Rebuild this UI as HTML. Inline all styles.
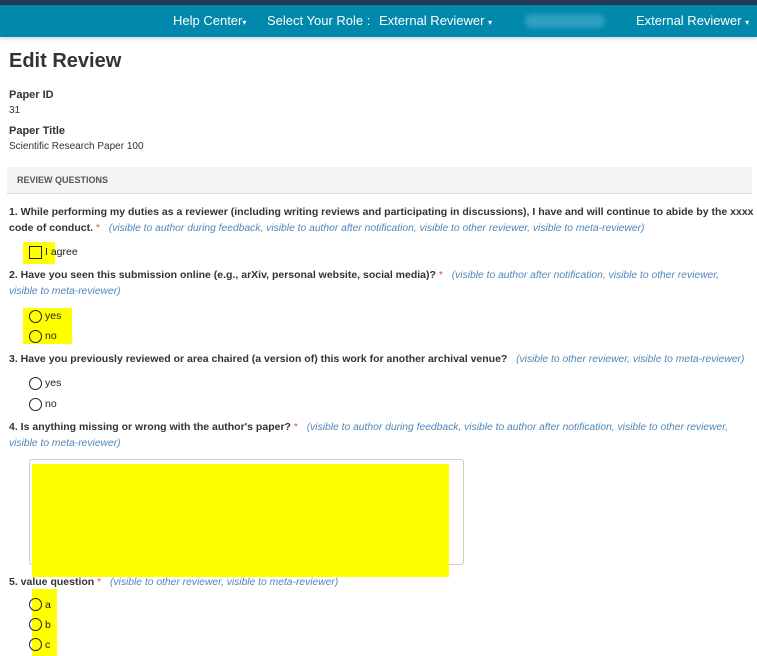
<!DOCTYPE html>
<html><head><style>
body{margin:0;width:757px;height:656px;overflow:hidden;background:#fff;font-family:"Liberation Sans",Arial,sans-serif;color:#333;position:relative}
.a{position:absolute;white-space:nowrap}
.q{font-size:10.5px;font-weight:bold;color:#333}
.h{font-size:10.3px;font-style:italic;font-weight:normal;color:#4f86b8}
.s{color:#d9534f;font-weight:normal}
.r{position:absolute;width:11px;height:11px;border:1px solid #222;border-radius:50%}
.y{position:absolute;background:#ffff00}
.n{position:absolute;top:13px;color:#fff;font-size:13px}
.o{font-size:10.5px;color:#222;line-height:13px}
</style></head><body>
<div class="a" style="left:0;top:0;width:757px;height:5px;background:#263753"></div>
<div class="a" style="left:0;top:5px;width:757px;height:32px;background:#0089ad;box-shadow:0 2px 3px rgba(0,0,0,.15)"></div>
<div class="n" style="left:173px">Help Center<span style="font-size:8px">▾</span></div>
<div class="n" style="left:267px">Select Your Role :</div>
<div class="n" style="left:379px">External Reviewer <span style="font-size:8px">▾</span></div>
<div class="a" style="left:525px;top:14px;width:80px;height:14px;background:#2d9fc0;border-radius:7px;filter:blur(2px)"></div>
<div class="n" style="left:636px">External Reviewer <span style="font-size:8px">▾</span></div>

<div class="a" style="left:9px;top:50px;font-size:20px;font-weight:bold;color:#333">Edit Review</div>
<div class="a" style="left:9px;top:89px;font-size:11px;font-weight:bold">Paper ID</div>
<div class="a" style="left:9px;top:105px;font-size:10px">31</div>
<div class="a" style="left:9px;top:125px;font-size:11px;font-weight:bold">Paper Title</div>
<div class="a" style="left:9px;top:141px;font-size:10px">Scientific Research Paper 100</div>
<div class="a" style="left:7px;top:167px;width:745px;height:26px;background:#f4f4f4;border-bottom:1px solid #ddd"></div>
<div class="a" style="left:17px;top:175px;font-size:9px;font-weight:bold;color:#555">REVIEW QUESTIONS</div>

<div class="a q" style="left:9px;top:206px">1. While performing my duties as a reviewer (including writing reviews and participating in discussions), I have and will continue to abide by the xxxx</div>
<div class="a q" style="left:9px;top:222px">code of conduct. <span class="s">*</span> &nbsp;&nbsp;<span class="h">(visible to author during feedback, visible to author after notification, visible to other reviewer, visible to meta-reviewer)</span></div>
<div class="y" style="left:23px;top:242px;width:32px;height:22px"></div>
<div class="a" style="left:29px;top:246px;width:11px;height:11px;border:1px solid #222"></div>
<div class="a o" style="left:45px;top:246px">I agree</div>

<div class="a q" style="left:9px;top:269px">2. Have you seen this submission online (e.g., arXiv, personal website, social media)? <span class="s">*</span> &nbsp;&nbsp;<span class="h">(visible to author after notification, visible to other reviewer,</span></div>
<div class="a h" style="left:9px;top:286px">visible to meta-reviewer)</div>
<div class="y" style="left:23px;top:308px;width:49px;height:36px"></div>
<div class="r" style="left:29px;top:310px"></div><div class="a o" style="left:45px;top:310px">yes</div>
<div class="r" style="left:29px;top:330px"></div><div class="a o" style="left:45px;top:330px">no</div>

<div class="a q" style="left:9px;top:353px">3. Have you previously reviewed or area chaired (a version of) this work for another archival venue? &nbsp;&nbsp;<span class="h">(visible to other reviewer, visible to meta-reviewer)</span></div>
<div class="r" style="left:29px;top:377px"></div><div class="a o" style="left:45px;top:377px">yes</div>
<div class="r" style="left:29px;top:398px"></div><div class="a o" style="left:45px;top:398px">no</div>

<div class="a q" style="left:9px;top:421px">4. Is anything missing or wrong with the author's paper? <span class="s">*</span> &nbsp;&nbsp;<span class="h">(visible to author during feedback, visible to author after notification, visible to other reviewer,</span></div>
<div class="a h" style="left:9px;top:438px">visible to meta-reviewer)</div>
<div class="a" style="left:29px;top:459px;width:433px;height:104px;border:1px solid #ccc;border-radius:3px"></div>
<div class="y" style="left:32px;top:464px;width:417px;height:113px"></div>

<div class="a q" style="left:9px;top:576px">5. value question <span class="s">*</span> &nbsp;&nbsp;<span class="h">(visible to other reviewer, visible to meta-reviewer)</span></div>
<div class="y" style="left:32px;top:589px;width:25px;height:67px"></div>
<div class="r" style="left:29px;top:598px"></div><div class="a o" style="left:45px;top:599px">a</div>
<div class="r" style="left:29px;top:618px"></div><div class="a o" style="left:45px;top:619px">b</div>
<div class="r" style="left:29px;top:638px"></div><div class="a o" style="left:45px;top:639px">c</div>
</body></html>
